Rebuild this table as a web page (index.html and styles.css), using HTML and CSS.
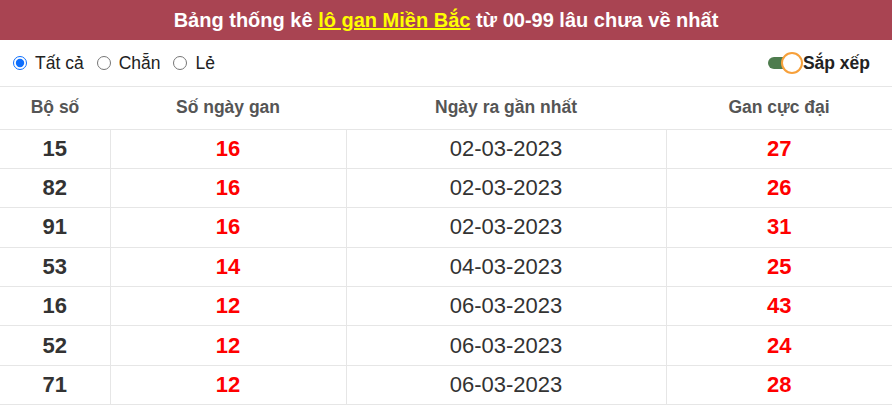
FILE: index.html
```html
<!DOCTYPE html>
<html lang="vi">
<head>
<meta charset="utf-8">
<link rel="stylesheet" href="styles.css">
</head>
<body>
<div class="box">
  <div class="title">Bảng thống kê <a class="hl" href="#">lô gan Miền Bắc</a> từ 00-99 lâu chưa về nhất</div>
  <div class="filters">
    <div class="radios">
      <label class="opt"><input type="radio" name="f" checked><span>Tất cả</span></label>
      <label class="opt"><input type="radio" name="f"><span>Chẵn</span></label>
      <label class="opt"><input type="radio" name="f"><span>Lẻ</span></label>
    </div>
    <div class="sort">
      <span class="switch"><span class="track"></span><span class="knob"></span></span>
      <span class="sort-label">Sắp xếp</span>
    </div>
  </div>
  <table class="tbl">
    <thead>
      <tr><th class="c1">Bộ số</th><th class="c2">Số ngày gan</th><th class="c3">Ngày ra gần nhất</th><th class="c4">Gan cực đại</th></tr>
    </thead>
    <tbody>
      <tr><td class="num">15</td><td class="red">16</td><td class="date">02-03-2023</td><td class="red">27</td></tr>
      <tr><td class="num">82</td><td class="red">16</td><td class="date">02-03-2023</td><td class="red">26</td></tr>
      <tr><td class="num">91</td><td class="red">16</td><td class="date">02-03-2023</td><td class="red">31</td></tr>
      <tr><td class="num">53</td><td class="red">14</td><td class="date">04-03-2023</td><td class="red">25</td></tr>
      <tr><td class="num">16</td><td class="red">12</td><td class="date">06-03-2023</td><td class="red">43</td></tr>
      <tr><td class="num">52</td><td class="red">12</td><td class="date">06-03-2023</td><td class="red">24</td></tr>
      <tr><td class="num">71</td><td class="red">12</td><td class="date">06-03-2023</td><td class="red">28</td></tr>
    </tbody>
  </table>
</div>
</body>
</html>
```
FILE: styles.css
```css
* { box-sizing: border-box; }
html, body { margin: 0; padding: 0; background: #fff; }
body { font-family: "Liberation Sans", Arial, sans-serif; color: #333; }
.box { width: 892px; }
.title {
  background: #a94452;
  color: #fff;
  font-weight: bold;
  font-size: 20px;
  height: 40px;
  line-height: 40px;
  text-align: center;
}
.hl { color: #ffff00; text-decoration: underline; }
.filters {
  height: 47px;
  display: flex;
  align-items: center;
  justify-content: space-between;
  padding: 0 22px 0 12px;
  border-bottom: 1px solid #e6e6e6;
}
.radios { display: flex; align-items: center; gap: 12px; }
.opt { display: flex; align-items: center; font-size: 17.5px; color: #222; }
.opt input { width: 14px; height: 14px; margin: 0 8px 0 1px; accent-color: #0d6efd; }
.sort { display: flex; align-items: center; }
.switch { position: relative; width: 38px; height: 24px; display: inline-block; }
.track {
  position: absolute; left: 4px; top: 6px; width: 24px; height: 12px;
  background: #4e7c4e; border-radius: 6px;
}
.knob {
  position: absolute; left: 17px; top: 1px; width: 22px; height: 22px;
  border-radius: 50%; background: #fff; border: 2px solid #f7a03a;
}
.sort-label { font-weight: bold; font-size: 17.5px; color: #222; margin-left: 1px; }
.tbl { width: 892px; border-collapse: collapse; table-layout: fixed; }
.tbl th {
  height: 42px; font-size: 17.5px; font-weight: bold; color: #555;
  border-bottom: 1px solid #e6e6e6; text-align: center; padding: 0;
}
.c1 { width: 110px; }
.c2 { width: 236px; }
.c3 { width: 320px; }
.c4 { width: 226px; }
.tbl td {
  height: 39.4px; text-align: center; font-size: 22px; padding: 0;
  border: 1px solid #e6e6e6; border-top: none;
}
.tbl td:first-child { border-left: none; }
.tbl td:last-child { border-right: none; }
.num { font-weight: bold; color: #333; }
.red { font-weight: bold; color: #ff0000; }
.date { color: #333; }
```
